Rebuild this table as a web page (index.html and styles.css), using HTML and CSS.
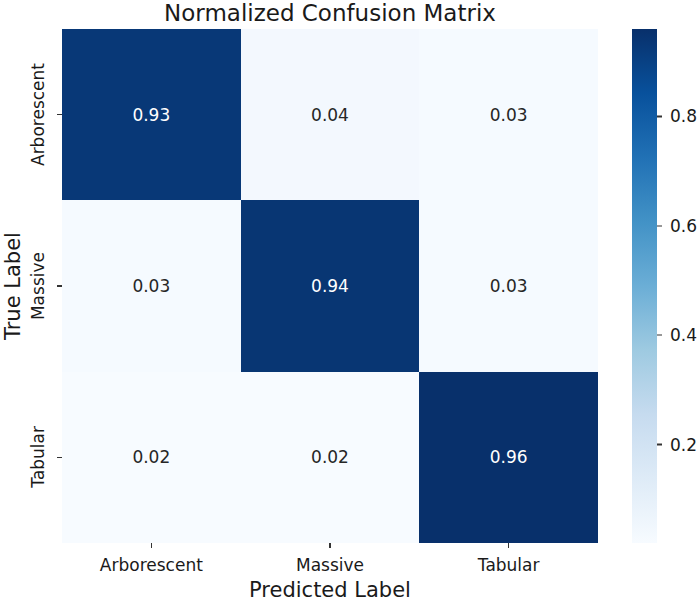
FILE: index.html
```html
<!DOCTYPE html>
<html>
<head>
<meta charset="utf-8">
<link rel="stylesheet" href="styles.css">
</head>
<body>
<div class="figure">
  <div class="title">Normalized Confusion Matrix</div>

  <div class="yaxis">
    <div class="ylabel">True Label</div>
    <div class="yticks">
      <div class="ytick"><span>Arborescent</span><i></i></div>
      <div class="ytick"><span>Massive</span><i></i></div>
      <div class="ytick"><span>Tabular</span><i></i></div>
    </div>
  </div>

  <div class="matrix">
    <div class="cell dark v93">0.93</div>
    <div class="cell light v04">0.04</div>
    <div class="cell light v03">0.03</div>
    <div class="cell light v03">0.03</div>
    <div class="cell dark v94">0.94</div>
    <div class="cell light v03">0.03</div>
    <div class="cell light v02">0.02</div>
    <div class="cell light v02">0.02</div>
    <div class="cell dark v96">0.96</div>
  </div>

  <div class="colorbar"></div>
  <div class="cticks">
    <div class="ctick" style="top:17.02%"><i></i><span>0.8</span></div>
    <div class="ctick" style="top:38.30%"><i></i><span>0.6</span></div>
    <div class="ctick" style="top:59.57%"><i></i><span>0.4</span></div>
    <div class="ctick" style="top:80.85%"><i></i><span>0.2</span></div>
  </div>

  <div class="xaxis">
    <div class="xticks">
      <div class="xtick"><i></i><span>Arborescent</span></div>
      <div class="xtick"><i></i><span>Massive</span></div>
      <div class="xtick"><i></i><span>Tabular</span></div>
    </div>
    <div class="xlabel">Predicted Label</div>
  </div>
</div>
</body>
</html>
```
FILE: styles.css
```css
html, body {
  margin: 0;
  padding: 0;
  background: #ffffff;
}

body {
  font-family: "DejaVu Sans", "Liberation Sans", sans-serif;
  color: #1a1a1a;
}

.figure {
  display: grid;
  grid-template-columns: 62px 536px 34px 25px 1fr;
  grid-template-rows: 29px 514px 1fr;
  width: 700px;
  height: 607px;
  overflow: hidden;
}

.title {
  grid-column: 2;
  grid-row: 1;
  font-size: 23px;
  line-height: normal;
  text-align: center;
  white-space: nowrap;
}

/* y axis */
.yaxis {
  grid-column: 1;
  grid-row: 2;
  display: flex;
  padding-left: 3px;
}

.ylabel {
  width: 21px;
  writing-mode: vertical-rl;
  transform: rotate(180deg);
  font-size: 21px;
  line-height: 1;
  text-align: center;
  white-space: nowrap;
}

.yticks {
  margin-left: 6px;
  display: grid;
  grid-template-rows: repeat(3, 1fr);
}

.ytick {
  display: flex;
  align-items: center;
}

.ytick span {
  width: 17px;
  writing-mode: vertical-rl;
  transform: rotate(180deg);
  font-size: 17px;
  line-height: 1;
  white-space: nowrap;
}

.ytick i {
  display: block;
  width: 5px;
  height: 1.2px;
  margin-left: 10px;
  background: #333;
}

/* matrix */
.matrix {
  grid-column: 2;
  grid-row: 2;
  display: grid;
  grid-template-columns: repeat(3, 1fr);
  grid-template-rows: repeat(3, 1fr);
}

.cell {
  display: flex;
  align-items: center;
  justify-content: center;
  font-size: 17px;
}

.cell.dark { color: #ffffff; }
.cell.light { color: #262626; }

.v93 { background: #083877; }
.v94 { background: #083673; }
.v96 { background: #08306b; }
.v04 { background: #f3f8fe; }
.v03 { background: #f5faff; }
.v02 { background: #f7fbff; }

/* colorbar */
.colorbar {
  grid-column: 4;
  grid-row: 2;
  background: linear-gradient(to bottom,
    #08306b 0%,
    #08519c 12.5%,
    #2171b5 25%,
    #4292c6 37.5%,
    #6baed6 50%,
    #9ecae1 62.5%,
    #c6dbef 75%,
    #deebf7 87.5%,
    #f7fbff 100%);
}

.cticks {
  grid-column: 5;
  grid-row: 2;
  position: relative;
}

.ctick {
  position: absolute;
  left: 0;
  display: flex;
  align-items: center;
  transform: translateY(-50%);
}

.ctick i {
  display: block;
  width: 5px;
  height: 1.2px;
  background: #333;
}

.ctick span {
  margin-left: 8px;
  font-size: 17px;
  line-height: 1;
}

/* x axis */
.xaxis {
  grid-column: 2;
  grid-row: 3;
  display: flex;
  flex-direction: column;
}

.xticks {
  display: grid;
  grid-template-columns: repeat(3, 1fr);
}

.xtick {
  display: flex;
  flex-direction: column;
  align-items: center;
}

.xtick i {
  display: block;
  width: 1.2px;
  height: 5px;
  background: #333;
  margin-bottom: 9px;
}

.xtick span {
  font-size: 17px;
  line-height: 1;
  white-space: nowrap;
}

.xlabel {
  margin-top: 6px;
  font-size: 21px;
  line-height: 1;
  text-align: center;
}
```
